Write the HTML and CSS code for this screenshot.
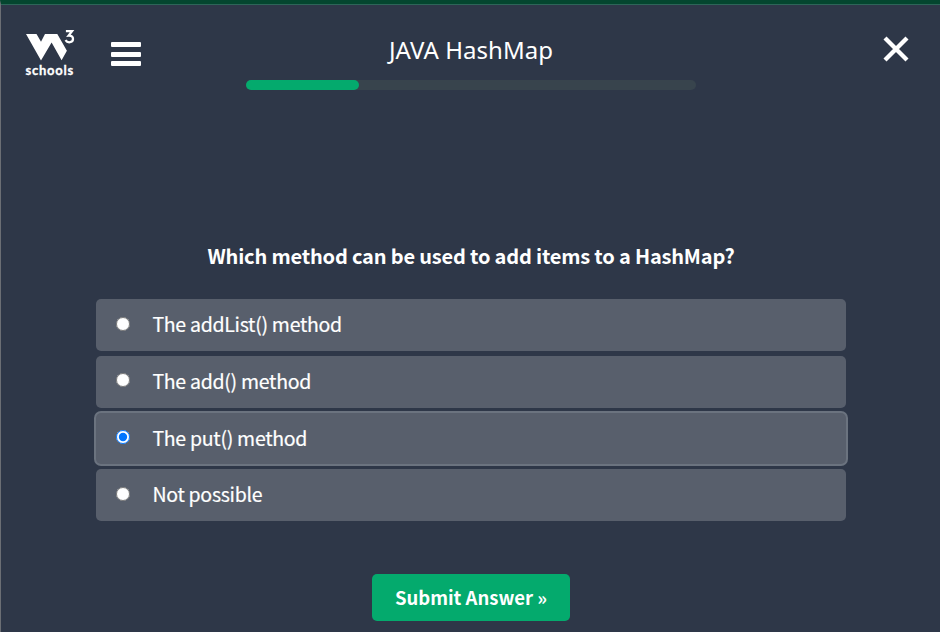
FILE: index.html
```html
<!DOCTYPE html>
<html lang="en">
<head>
<meta charset="utf-8">
<title>JAVA HashMap</title>
<link rel="stylesheet" href="styles.css">
</head>
<body>
<div class="page">
  <header class="header">
    <div class="left">
      <div class="logo">
        <svg class="mark" width="50" height="34" viewBox="0 0 50 34">
          <path fill="#fff" d="M1 6H11.5L16 13.8L20 6H32.3L41.9 22.7L36.6 32.3L26.6 14.6L16 32.5Z"/>
          <path fill="none" stroke="#fff" stroke-width="2.3" d="M40.9 3.2H47L43.6 7.6C46.4 7.4 48.1 8.9 48 11C47.9 14.8 42.6 15.4 40.5 12.2"/>
        </svg>
        <span class="logo-name">schools</span>
      </div>
      <button class="menu" aria-label="Menu"><i></i><i></i><i></i></button>
    </div>
    <div class="center">
      <h1 class="title">JAVA HashMap</h1>
      <div class="track"><div class="fill"></div></div>
    </div>
    <button class="close" aria-label="Close">
      <svg width="26" height="26" viewBox="0 0 26 26"><path d="M2 2L24 24M24 2L2 24" stroke="#fff" stroke-width="4.3"/></svg>
    </button>
  </header>
  <main class="quiz">
    <h2 class="question">Which method can be used to add items to a HashMap?</h2>
    <form class="options">
      <label class="option"><input type="radio" name="quiz"><span>The addList() method</span></label>
      <label class="option"><input type="radio" name="quiz"><span>The add() method</span></label>
      <label class="option selected"><input type="radio" name="quiz" checked><span>The put() method</span></label>
      <label class="option"><input type="radio" name="quiz"><span>Not possible</span></label>
    </form>
    <button class="submit">Submit Answer »</button>
  </main>
</div>
</body>
</html>
```
FILE: styles.css
```css
* { box-sizing: border-box; }
body { margin: 0; background: #2e3748; color: #fff; font-family: "Noto Sans CJK SC", "Noto Sans", sans-serif; overflow: hidden; }
button { border: 0; padding: 0; background: none; color: inherit; font: inherit; display: block; }
.page { height: 632px; border-top: 4px solid #04462f; border-left: 1px solid #6b6e74; box-shadow: inset 0 1px #2d6558; }
.header { display: grid; grid-template-columns: 245px 450px 1fr; height: 204px; }
.left { display: flex; align-items: flex-start; }
.logo { width: 50px; margin: 24px 0 0 24px; }
.mark { display: block; }
.logo-name { display: block; margin-left: .5px; font: 700 13px/17px Lato, sans-serif; letter-spacing: .75px; -webkit-text-stroke: .3px #fff; }
.menu { width: 30px; margin: 38px 0 0 36px; display: grid; gap: 4.5px; }
.menu i { height: 5px; background: #fff; border-radius: 1px; }
.center { padding-top: 29px; }
.title { margin: 0; text-align: center; font: 400 24px/34px "Noto Sans", sans-serif; letter-spacing: .05px; }
.track { height: 10px; margin-top: 13px; border-radius: 5px; background: #38444d; }
.fill { width: 25%; height: 10px; border-radius: 5px; background: #04aa6d; }
.close { justify-self: end; align-self: start; margin: 32px 31px 0 0; }
.close svg { display: block; }
.quiz { width: 750px; margin-left: 95px; padding-top: 33px; }
.question { margin: 0; font-size: 20px; line-height: 30px; font-weight: 700; letter-spacing: -.18px; text-align: center; white-space: nowrap; }
.options { display: grid; gap: 5px; margin-top: 28px; }
.option { display: flex; height: 51.75px; padding-left: 20px; border-radius: 5px; background: #585f6c; font-size: 19.5px; line-height: 50px; letter-spacing: -.28px; }
.option input { width: 14px; height: 14px; margin: 17.5px 22.4px 0 0; }
.option span { -webkit-text-stroke: .2px #fff; }
.selected { box-shadow: 0 0 0 2px #6b737f; }
.submit { width: 198px; height: 47px; margin: 53px auto 0; border-radius: 5px; background: #04aa6d; font-size: 18.5px; font-weight: 700; line-height: 47px; }
```
